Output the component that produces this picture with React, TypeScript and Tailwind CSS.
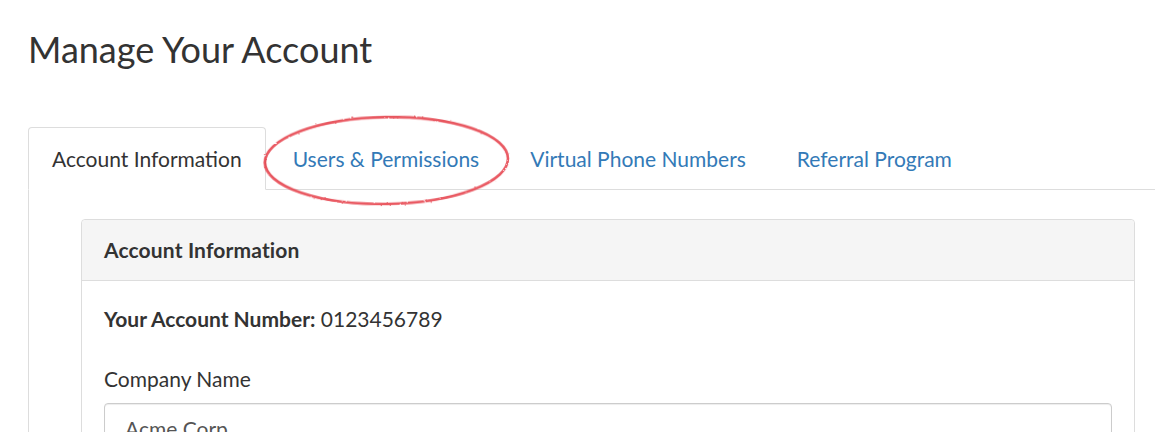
import React from 'react'

const tabs = [
    { label: "Account Information", active: true },
    { label: "Users & Permissions", active: false },
    { label: "Virtual Phone Numbers", active: false },
    { label: "Referral Program", active: false },
]

const App = () => {
    return (
        <div className="relative w-[1155px] h-[432px] overflow-hidden bg-white text-[#333] font-['Lato','Liberation_Sans',sans-serif]">
            <div className="w-[1200px] pl-[28px]">
                <h1 className="pt-[29px] text-[36px] leading-[40px] font-normal">Manage Your Account</h1>

                {/* tabs */}
                <ul className="mt-[58px] flex border-b border-[#ddd]">
                    {
                        tabs.map((each, i) => (
                            <li key={i} className="-mb-px mr-[3px]">
                                <a className={
                                    each.active
                                        ? "block rounded-t-[4px] border border-[#ddd] border-b-white bg-white px-[23px] pt-[17px] pb-[16px] text-[21px] leading-[28px] text-[#333]"
                                        : "block rounded-t-[4px] border border-transparent px-[23px] pt-[17px] pb-[16px] text-[21px] leading-[28px] text-[#337ab7]"
                                }>
                                    {each.label}
                                </a>
                            </li>
                        ))
                    }
                </ul>

                {/* tab content */}
                <div className="border-l border-[#ddd] pl-[52px] pt-[29px]">
                    <div className="w-[1054px] rounded-[4px] border border-[#ddd] bg-white">
                        <div className="h-[61px] flex items-center rounded-t-[4px] border-b border-[#ddd] bg-[#f5f5f5] px-[22px]">
                            <h3 className="text-[21px] leading-[28px] font-bold tracking-[0.15px]">Account Information</h3>
                        </div>
                        <div className="pt-[24px] pl-[22px] pr-[22px] pb-[30px]">
                            <p className="text-[21px] leading-[28px]">
                                <span className="font-bold">Your Account Number:</span> 0123456789
                            </p>
                            <label className="block mt-[32px] text-[21px] leading-[28px]">Company Name</label>
                            <input
                                defaultValue="Acme Corp"
                                className="mt-[10px] block w-full rounded-[4px] border border-[#ccc] px-[20px] pt-[11px] pb-[8px] text-[21px] leading-[28px] text-[#555] shadow-[inset_0_1px_1px_rgba(0,0,0,0.075)] outline-none"
                            />
                        </div>
                    </div>
                </div>
            </div>

            {/* red annotation circle */}
            <svg className="absolute left-[258px] top-[110px] pointer-events-none" width="260" height="104" viewBox="0 0 260 104" fill="none">
                <defs>
                    <filter id="rough" x="-5%" y="-10%" width="110%" height="120%">
                        <feTurbulence type="fractalNoise" baseFrequency="0.8" numOctaves="2" seed="3" />
                        <feDisplacementMap in="SourceGraphic" scale="2" />
                    </filter>
                </defs>
                <g transform="rotate(-1 128 51)" filter="url(#rough)">
                    <ellipse cx="128.5" cy="50.5" rx="121.5" ry="43.5" stroke="#e02a36" strokeWidth="2.6" opacity="0.8" />
                    <ellipse cx="128" cy="51" rx="122" ry="43" stroke="#f0606a" strokeWidth="1.6" opacity="0.5" />
                </g>
            </svg>
        </div>
    )
}

export default App
